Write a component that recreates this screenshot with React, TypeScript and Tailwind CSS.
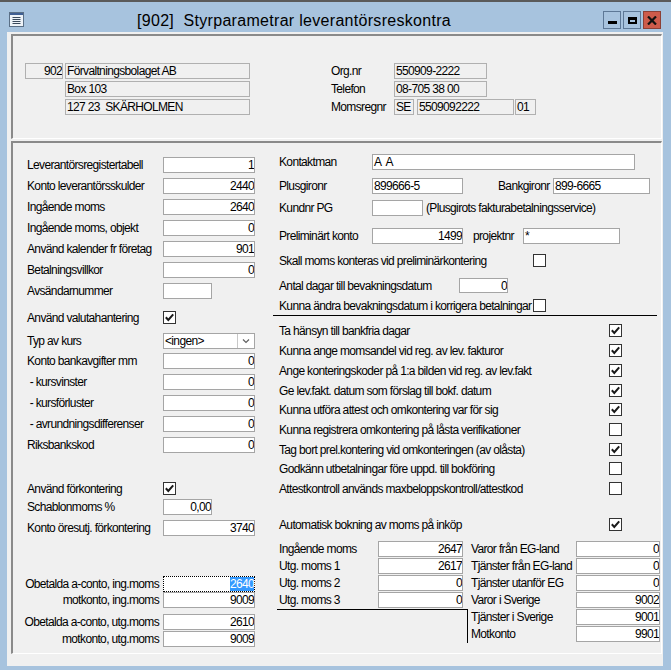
import React from 'react';

function Check({ checked }: { checked?: boolean }) {
  return (
    <div className="w-[13px] h-[13px] shrink-0 border border-[#333333] bg-white flex items-center justify-center">
      {checked && (
        <svg width="11" height="11" viewBox="0 0 11 11">
          <path d="M1.8 5.3 L4.3 8 L9.2 2.3" fill="none" stroke="#1a1a1a" strokeWidth="2" />
        </svg>
      )}
    </div>
  );
}

function Box({ w, value, h = 'h-[16px]', left }: { w: string; value?: string; h?: string; left?: boolean }) {
  return (
    <div
      className={`${w} ${h} shrink-0 border border-[#a5a5a5] bg-white flex items-center leading-none whitespace-pre overflow-hidden ${
        left ? 'justify-start pl-[1px]' : 'justify-end'
      }`}
    >
      {value}
    </div>
  );
}

function RoBox({ w, value, right }: { w: string; value: string; right?: boolean }) {
  return (
    <div
      className={`${w} h-[16px] shrink-0 border border-[#b0b0b0] bg-[#f0f0f0] flex items-center leading-none whitespace-pre overflow-hidden ${
        right ? 'justify-end' : 'justify-start pl-[1px]'
      }`}
    >
      {value}
    </div>
  );
}

function LRow({ h, label, children, right }: { h: string; label: string; children: React.ReactNode; right?: boolean }) {
  return (
    <div className={`flex items-start ${h}`}>
      <div
        className={`w-[136px] shrink-0 h-[16px] flex items-center whitespace-pre ${right ? 'justify-end pr-[4px]' : ''}`}
      >
        {label}
      </div>
      {children}
    </div>
  );
}

function LCheckRow({ h, label, checked }: { h: string; label: string; checked?: boolean }) {
  return (
    <div className={`flex items-start ${h}`}>
      <div className="w-[136px] shrink-0 h-[13px] flex items-center">{label}</div>
      <Check checked={checked} />
    </div>
  );
}

function RCheckRow({ h, label, checked }: { h: string; label: string; checked?: boolean }) {
  return (
    <div className={`flex items-start ${h}`}>
      <div className="w-[330px] shrink-0 h-[13px] flex items-center">{label}</div>
      <Check checked={checked} />
    </div>
  );
}

function SmallRow({ label, value, lw, bw }: { label: string; value: string; lw: string; bw: string }) {
  return (
    <div className="flex items-start h-[17px]">
      <div className={`${lw} shrink-0 h-[16px] flex items-center`}>{label}</div>
      <Box w={bw} value={value} />
    </div>
  );
}

export default function App() {
  return (
    <div className="w-[671px] h-[670px] bg-[#a7c3de] border-t-2 border-[#5a5a5a] font-['Liberation_Sans',Arial,sans-serif] text-[12px] tracking-[-0.65px] text-black whitespace-nowrap overflow-hidden">
      {/* title bar */}
      <div className="h-[30px] flex items-start">
        <div className="ml-[9px] mt-[10px]">
          <svg width="15" height="15" viewBox="0 0 15 15">
            <rect x="0.5" y="0.5" width="14" height="14" fill="#eef3f8" stroke="#5a6f86" />
            <rect x="1" y="1" width="13" height="2" fill="#3f5f93" />
            <path d="M3.5 5.5 H11.5 M3.5 7.5 H11.5 M3.5 9.5 H11.5 M3.5 11.5 H11.5" stroke="#3a4a5c" strokeWidth="1" />
          </svg>
        </div>
        <div className="ml-[113px] mt-[9px] leading-[20px] text-[16px] tracking-[0.3px] whitespace-pre">
          [902]  Styrparametrar leverantörsreskontra
        </div>
        <div className="ml-auto mr-[10px] mt-[9px] flex gap-[2px]">
          <div className="w-[18px] h-[18px] border border-[#5d7896] flex items-end justify-center pb-[4px]">
            <div className="w-[9px] h-[3px] bg-black" />
          </div>
          <div className="w-[18px] h-[18px] border border-[#5d7896] flex items-center justify-center">
            <div className="w-[9px] h-[7px] border-2 border-t-[3px] border-black" />
          </div>
          <div className="w-[18px] h-[18px] border border-[#8c4036] bg-[#cd5b4b] flex items-center justify-center">
            <svg width="10" height="9" viewBox="0 0 10 9">
              <path d="M1 0.5 L9 8.5 M9 0.5 L1 8.5" stroke="#111" strokeWidth="2.2" />
            </svg>
          </div>
        </div>
      </div>

      {/* content area */}
      <div className="ml-[7px] mr-[8px] h-[634px] bg-[#f0f0f0] pl-[4px] pr-[1px] pt-[2px]">
        {/* header panel */}
        <div className="h-[105px] border-t-2 border-l-2 border-[#8a8a8a] border-b border-r border-b-white border-r-white pt-[27px] pl-[12px]">
          <div className="flex items-start h-[18px]">
            <RoBox w="w-[38px]" value="902" right />
            <div className="w-[2px]" />
            <RoBox w="w-[185px]" value="Förvaltningsbolaget AB" />
            <div className="ml-[81px] w-[63px] h-[16px] flex items-center">Org.nr</div>
            <RoBox w="w-[93px]" value="550909-2222" />
          </div>
          <div className="flex items-start h-[18px]">
            <div className="w-[40px]" />
            <RoBox w="w-[185px]" value="Box 103" />
            <div className="ml-[81px] w-[63px] h-[16px] flex items-center">Telefon</div>
            <RoBox w="w-[93px]" value="08-705 38 00" />
          </div>
          <div className="flex items-start h-[18px]">
            <div className="w-[40px]" />
            <RoBox w="w-[185px]" value="127 23  SKÄRHOLMEN" />
            <div className="ml-[81px] w-[63px] h-[16px] flex items-center">Momsregnr</div>
            <RoBox w="w-[20px]" value="SE" />
            <div className="w-[3px]" />
            <RoBox w="w-[97px]" value="5509092222" />
            <div className="w-[1px]" />
            <RoBox w="w-[21px]" value="01" />
          </div>
        </div>

        {/* main panel */}
        <div className="mt-[2px] h-[513px] border-t-2 border-l-2 border-[#8a8a8a] border-b border-r border-b-white border-r-white flex">
          {/* left column */}
          <div className="w-[257px] shrink-0 pl-[14px] pt-[14px]">
            <LRow h="h-[21px]" label="Leverantörsregistertabell"><Box w="w-[92px]" value="1" /></LRow>
            <LRow h="h-[21px]" label="Konto leverantörsskulder"><Box w="w-[92px]" value="2440" /></LRow>
            <LRow h="h-[21px]" label="Ingående moms"><Box w="w-[92px]" value="2640" /></LRow>
            <LRow h="h-[21px]" label="Ingående moms, objekt"><Box w="w-[92px]" value="0" /></LRow>
            <LRow h="h-[21px]" label="Använd kalender fr företag"><Box w="w-[92px]" value="901" /></LRow>
            <LRow h="h-[21px]" label="Betalningsvillkor"><Box w="w-[92px]" value="0" /></LRow>
            <LRow h="h-[28px]" label="Avsändarnummer"><Box w="w-[49px]" value="" /></LRow>
            <LCheckRow h="h-[22px]" label="Använd valutahantering" checked />
            <LRow h="h-[20px]" label="Typ av kurs">
              <div className="w-[92px] h-[16px] shrink-0 border border-[#a5a5a5] bg-white flex items-center">
                <div className="flex-1 pl-[1px] leading-none">&lt;ingen&gt;</div>
                <div className="w-[17px] h-[14px] border-l border-[#c8c8c8] flex items-center justify-center">
                  <svg width="8" height="6" viewBox="0 0 8 6">
                    <path d="M1 1.5 L4 4.5 L7 1.5" fill="none" stroke="#606060" strokeWidth="1.2" />
                  </svg>
                </div>
              </div>
            </LRow>
            <LRow h="h-[21px]" label="Konto bankavgifter mm"><Box w="w-[92px]" value="0" /></LRow>
            <LRow h="h-[21px]" label=" - kursvinster"><Box w="w-[92px]" value="0" /></LRow>
            <LRow h="h-[21px]" label=" - kursförluster"><Box w="w-[92px]" value="0" /></LRow>
            <LRow h="h-[21px]" label=" - avrundningsdifferenser"><Box w="w-[92px]" value="0" /></LRow>
            <LRow h="h-[45px]" label="Riksbankskod"><Box w="w-[92px]" value="0" /></LRow>
            <LCheckRow h="h-[17px]" label="Använd förkontering" checked />
            <LRow h="h-[21px]" label="Schablonmoms %"><Box w="w-[49px]" value="0,00" /></LRow>
            <LRow h="h-[56px]" label="Konto öresutj. förkontering"><Box w="w-[92px]" value="3740" /></LRow>
            <LRow h="h-[16px]" label="Obetalda a-conto, ing.moms" right>
              <div className="w-[92px] h-[16px] shrink-0 border border-dotted border-black bg-white flex items-center justify-end">
                <span className="bg-[#3399ff] text-white leading-[14px] h-[14px]">2640</span>
              </div>
            </LRow>
            <LRow h="h-[22px]" label="motkonto, ing.moms" right><Box w="w-[92px]" value="9009" /></LRow>
            <LRow h="h-[17px]" label="Obetalda a-conto, utg.moms" right><Box w="w-[92px]" value="2610" /></LRow>
            <LRow h="h-[16px]" label="motkonto, utg.moms" right><Box w="w-[92px]" value="9009" /></LRow>
          </div>

          {/* right column */}
          <div className="flex-1 pl-[9px] pt-[11px]">
            <div className="flex items-start h-[24px]">
              <div className="w-[93px] shrink-0 h-[16px] flex items-center">Kontaktman</div>
              <Box w="w-[263px]" value="A  A" left />
            </div>
            <div className="flex items-start h-[22px]">
              <div className="w-[93px] shrink-0 h-[16px] flex items-center">Plusgironr</div>
              <Box w="w-[91px]" value="899666-5" left />
              <div className="ml-[35px] w-[55px] shrink-0 h-[16px] flex items-center">Bankgironr</div>
              <Box w="w-[97px]" value="899-6665" left />
            </div>
            <div className="flex items-start h-[28px]">
              <div className="w-[93px] shrink-0 h-[16px] flex items-center">Kundnr PG</div>
              <Box w="w-[51px]" value="" />
              <div className="ml-[3px] h-[16px] flex items-center">(Plusgirots fakturabetalningsservice)</div>
            </div>
            <div className="flex items-start h-[26px]">
              <div className="w-[93px] shrink-0 h-[16px] flex items-center">Preliminärt konto</div>
              <Box w="w-[91px]" value="1499" />
              <div className="ml-[10px] w-[50px] shrink-0 h-[16px] flex items-center">projektnr</div>
              <Box w="w-[97px]" value="*" left />
            </div>
            <div className="flex items-start h-[24px]">
              <div className="w-[254px] shrink-0 h-[13px] flex items-center">Skall moms konteras vid preliminärkontering</div>
              <Check />
            </div>
            <div className="flex items-start h-[21px]">
              <div className="w-[180px] shrink-0 h-[15px] flex items-center">Antal dagar till bevakningsdatum</div>
              <Box w="w-[49px]" value="0" h="h-[15px]" />
            </div>
            <div className="flex items-start h-[16px]">
              <div className="w-[254px] shrink-0 h-[13px] flex items-center">Kunna ändra bevakningsdatum i korrigera betalningar</div>
              <Check />
            </div>
            <div className="-ml-[6px] w-[384px] h-px bg-black" />
            <div className="mt-[8px]">
              <RCheckRow h="h-[20px]" label="Ta hänsyn till bankfria dagar" checked />
              <RCheckRow h="h-[20px]" label="Kunna ange momsandel vid reg. av lev. fakturor" checked />
              <RCheckRow h="h-[20px]" label="Ange konteringskoder på 1:a bilden vid reg. av lev.fakt" checked />
              <RCheckRow h="h-[19px]" label="Ge lev.fakt. datum som förslag till bokf. datum" checked />
              <RCheckRow h="h-[20px]" label="Kunna utföra attest och omkontering var för sig" checked />
              <RCheckRow h="h-[20px]" label="Kunna registrera omkontering på låsta verifikationer" />
              <RCheckRow h="h-[19px]" label="Tag bort prel.kontering vid omkonteringen (av olåsta)" checked />
              <RCheckRow h="h-[20px]" label="Godkänn utbetalningar före uppd. till bokföring" />
              <RCheckRow h="h-[20px]" label="Attestkontroll används maxbeloppskontroll/attestkod" />
            </div>
            <div className="mt-[16px]">
              <RCheckRow h="h-[23px]" label="Automatisk bokning av moms på inköp" checked />
            </div>
            <div className="flex">
              <div className="w-[188px] shrink-0">
                <SmallRow label="Ingående moms" value="2647" lw="w-[99px]" bw="w-[85px]" />
                <SmallRow label="Utg. moms 1" value="2617" lw="w-[99px]" bw="w-[85px]" />
                <SmallRow label="Utg. moms 2" value="0" lw="w-[99px]" bw="w-[85px]" />
                <SmallRow label="Utg. moms 3" value="0" lw="w-[99px]" bw="w-[85px]" />
                <div className="-ml-[2px] w-[191px] h-[34px] border-t border-r border-black" />
              </div>
              <div className="pl-[4px]">
                <SmallRow label="Varor från EG-land" value="0" lw="w-[105px]" bw="w-[84px]" />
                <SmallRow label="Tjänster från EG-land" value="0" lw="w-[105px]" bw="w-[84px]" />
                <SmallRow label="Tjänster utanför EG" value="0" lw="w-[105px]" bw="w-[84px]" />
                <SmallRow label="Varor i Sverige" value="9002" lw="w-[105px]" bw="w-[84px]" />
                <SmallRow label="Tjänster i Sverige" value="9001" lw="w-[105px]" bw="w-[84px]" />
                <SmallRow label="Motkonto" value="9901" lw="w-[105px]" bw="w-[84px]" />
              </div>
            </div>
          </div>
        </div>
      </div>
    </div>
  );
}
